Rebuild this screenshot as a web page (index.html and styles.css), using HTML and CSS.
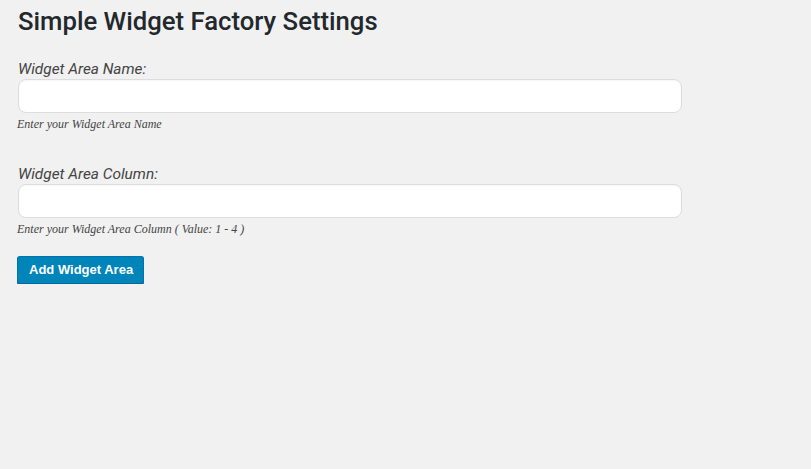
FILE: index.html
```html
<!DOCTYPE html>
<html>
<head>
<meta charset="utf-8">
<link rel="stylesheet" href="styles.css">
</head>
<body>
<div class="wrap">
  <h1 class="title">Simple Widget Factory Settings</h1>
  <form class="form">
    <div class="field">
      <label class="label">Widget Area Name:</label>
      <input class="input" type="text">
      <p class="help">Enter your Widget Area Name</p>
    </div>
    <div class="field">
      <label class="label">Widget Area Column:</label>
      <input class="input" type="text">
      <p class="help">Enter your Widget Area Column ( Value: 1 - 4 )</p>
    </div>
    <button class="button" type="button">Add Widget Area</button>
  </form>
</div>
</body>
</html>
```
FILE: styles.css
```css
html, body {
  margin: 0;
  padding: 0;
  background: #f1f1f1;
}
.wrap {
  padding: 0 0 0 17px;
}
.title {
  margin: 0;
  padding: 6px 0 0 1px;
  font-family: Roboto, "Liberation Sans", sans-serif;
  font-size: 25.7px;
  font-weight: 500;
  line-height: 30px;
  color: #23282d;
}
.form {
  display: flex;
  flex-direction: column;
  align-items: flex-start;
  margin-top: 23px;
}
.field {
  display: flex;
  flex-direction: column;
  align-items: flex-start;
  margin-bottom: 33px;
}
.label {
  display: block;
  padding-left: 1px;
  font-family: Roboto, "Liberation Sans", sans-serif;
  font-style: italic;
  font-size: 15.4px;
  line-height: 20px;
  color: #444;
}
.input {
  box-sizing: border-box;
  width: 664px;
  height: 34px;
  margin: 0 0 0 1px;
  border: 1px solid #ddd;
  border-radius: 8px;
  background: #fff;
  box-shadow: inset 0 1px 2px rgba(0,0,0,0.04);
}
.help {
  margin: 4px 0 0;
  font-family: "Liberation Serif", serif;
  font-style: italic;
  font-size: 12px;
  line-height: 14px;
  color: #444;
}
.button {
  box-sizing: border-box;
  height: 28px;
  padding: 0 10px 1px 11px;
  margin-top: -13px;
  background: #0085ba;
  border: 1px solid #0073aa;
  border-bottom-color: #006799;
  border-radius: 3px;
  box-shadow: 0 1px 0 #006799;
  color: #fff;
  font-family: "Liberation Sans", Arial, sans-serif;
  font-weight: bold;
  font-size: 13px;
  line-height: 26px;
}
```
